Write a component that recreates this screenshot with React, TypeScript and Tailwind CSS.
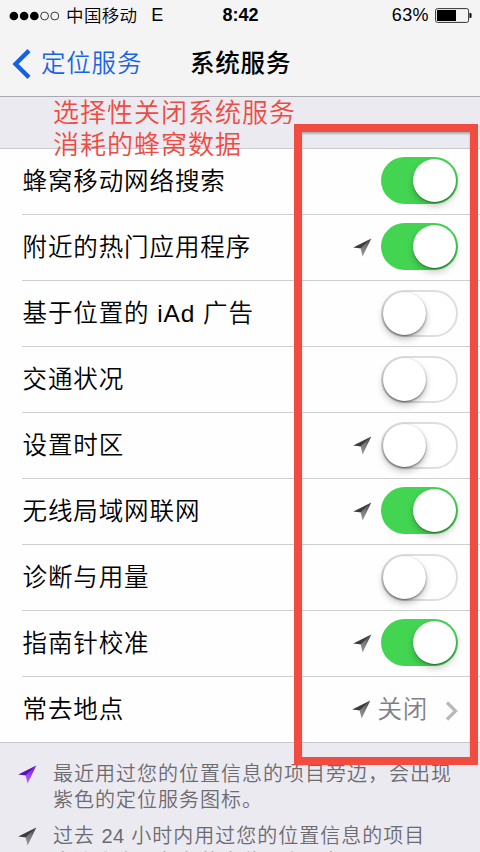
const FONT = "font-['Liberation_Sans','Noto_Sans_CJK_SC',sans-serif]";

type Row = { label: string; on?: boolean; arrow?: boolean; link?: string };

const rows: Row[] = [
  { label: '蜂窝移动网络搜索', on: true },
  { label: '附近的热门应用程序', on: true, arrow: true },
  { label: '基于位置的 iAd 广告', on: false },
  { label: '交通状况', on: false },
  { label: '设置时区', on: false, arrow: true },
  { label: '无线局域网联网', on: true, arrow: true },
  { label: '诊断与用量', on: false },
  { label: '指南针校准', on: true, arrow: true },
  { label: '常去地点', arrow: true, link: '关闭' },
];

function Arrow({ purple = false }: { purple?: boolean }) {
  const id = purple ? 'arrow-purple' : 'arrow-gray';
  return (
    <svg width="19" height="19" viewBox="0 0 19 19" className="block shrink-0">
      <defs>
        <linearGradient id={id} x1="0.9" y1="0" x2="0.5" y2="1">
          <stop offset="0" stopColor={purple ? '#5a0cb8' : '#2c2c2e'} />
          <stop offset="0.5" stopColor={purple ? '#8f35ec' : '#737376'} />
          <stop offset="1" stopColor={purple ? '#b45cff' : '#929295'} />
        </linearGradient>
      </defs>
      <path d="M18.3 0.6 L0.2 9.6 L8.2 10.6 Z" fill={purple ? '#5a0fc0' : '#3c3c3e'} />
      <path d="M18.3 0.6 L7.6 10.4 L9.6 18.4 Z" fill={`url(#${id})`} />
    </svg>
  );
}

function Toggle({ on }: { on: boolean }) {
  return on ? (
    <div className="mb-[2px] flex h-[47px] w-[77px] items-center justify-end rounded-full bg-[#43d551] pr-[2px]">
      <div className="size-[43px] rounded-full bg-white shadow-[0_4px_7px_rgba(0,0,0,0.22),0_1px_1px_rgba(0,0,0,0.35)]" />
    </div>
  ) : (
    <div className="mb-px flex h-[47px] w-[77px] items-center rounded-full border-2 border-[#dedede] bg-white">
      <div className="size-[43px] shrink-0 rounded-full bg-white shadow-[0_4px_7px_rgba(0,0,0,0.25),0_1px_2px_rgba(0,0,0,0.5)]" />
    </div>
  );
}

export default function App() {
  return (
    <div className={`relative flex h-[852px] w-[480px] flex-col overflow-hidden bg-[#ebeaf1] text-black ${FONT}`}>
      <header className="h-[97px] shrink-0 border-b border-[#a9a8b0] bg-[#f4f4f4]">
        <div className="grid h-[31px] grid-cols-3 items-center pl-[9px] pr-[8px] text-[18px]">
          <div className="flex items-center whitespace-nowrap">
            <svg width="52" height="10" viewBox="0 0 52 10" className="mr-[6px]">
              {[0, 1, 2, 3, 4].map((i) => (
                <circle key={i} cx={5 + i * 10.4} cy="5" r={i < 3 ? 4.4 : 4} fill={i < 3 ? '#000' : 'none'} stroke="#222" strokeWidth={i < 3 ? 0 : 0.9} />
              ))}
            </svg>
            <span className="pt-px text-[17.5px] font-[350] tracking-[0.3px]">中国移动</span>
            <span className="ml-[14px]">E</span>
          </div>
          <div className="text-center font-bold">8:42</div>
          <div className="flex items-center justify-end">
            <span className="tracking-[0.4px]">63%</span>
            <svg width="37" height="15" viewBox="0 0 37 15" className="ml-[6px]">
              <rect x="0.6" y="0.6" width="33" height="13.8" rx="2" fill="none" stroke="#333" />
              <rect x="2" y="2" width="19" height="11" />
              <path d="M34.5 5h1a1.2 1.2 0 0 1 1 1v3a1.2 1.2 0 0 1-1 1h-1z" />
            </svg>
          </div>
        </div>
        <div className="flex h-[65px] items-center">
          <div className="flex w-[190px] items-center pl-[12px] text-[24.5px] tracking-[0.8px] text-[#1764e8]">
            <svg width="19" height="30" viewBox="0 0 19 30" fill="none" stroke="#1461e6" strokeWidth="4.3" className="mr-[10px]">
              <path d="M17 1.6 3.5 15 17 28.4" />
            </svg>
            <span className="pt-[2px] font-[350]">定位服务</span>
          </div>
          <h1 className="pt-[2px] text-[24.5px] font-medium tracking-[0.8px]">系统服务</h1>
        </div>
      </header>

      <div className="h-[52px] shrink-0 border-b border-[#cbcacf] pl-[53px] text-[26px] font-[350] leading-[32px] tracking-[1px] text-[#f04a42]">
        <p className="relative z-10 w-[260px]">选择性关闭系统服务<br />消耗的蜂窝数据</p>
      </div>

      <main className="shrink-0 border-b border-[#c9c8cd] bg-[#fefefe]">
        {rows.map((row, i) => (
          <div key={row.label} className="pl-[22px]">
            <div className={`flex items-center pr-[22px] ${i < rows.length - 1 ? 'h-[66px] border-b border-[#cfcfd1]' : 'h-[65px]'}`}>
              <span className="flex-1 pl-[0.5px] pt-[2px] text-[24.5px] font-[350] tracking-[0.9px]">{row.label}</span>
              {row.arrow && <span className={`mb-px ${row.link ? 'mr-[6px]' : 'mr-[9px]'}`}><Arrow /></span>}
              {row.link ? (
                <div className="flex items-center pt-[2px] text-[24.5px] font-[350] tracking-[0.8px] text-[#808083]">
                  {row.link}
                  <svg width="13" height="20" viewBox="0 0 13 20" fill="none" stroke="#b9b9bd" strokeWidth="3.2" className="ml-[17px]">
                    <path d="m2 1.5 8.5 8.5L2 18.5" />
                  </svg>
                </div>
              ) : (
                <Toggle on={!!row.on} />
              )}
            </div>
          </div>
        ))}
      </main>

      <footer className="flex flex-col gap-[10px] pl-[18px] pt-[18px] text-[20px] font-[350] leading-[26px] tracking-[1px] text-[#6b6b70]">
        <div className="flex items-start">
          <span className="mr-[16px] mt-[4px]"><Arrow purple /></span>
          <p className="whitespace-nowrap">最近用过您的位置信息的项目旁边，会出现<br />紫色的定位服务图标。</p>
        </div>
        <div className="flex items-start">
          <span className="mr-[16px] mt-[4px]"><Arrow /></span>
          <p className="whitespace-nowrap">过去 <span className="tracking-[0.4px]">24</span> 小时内用过您的位置信息的项目<br />旁边会出现灰色的定位服务图标。</p>
        </div>
      </footer>

      <div className="pointer-events-none absolute left-[294px] top-[124px] h-[641px] w-[184px] border-8 border-[#f24b40] shadow-[inset_0_2px_2px_rgba(0,0,0,0.25)]" />
    </div>
  );
}
